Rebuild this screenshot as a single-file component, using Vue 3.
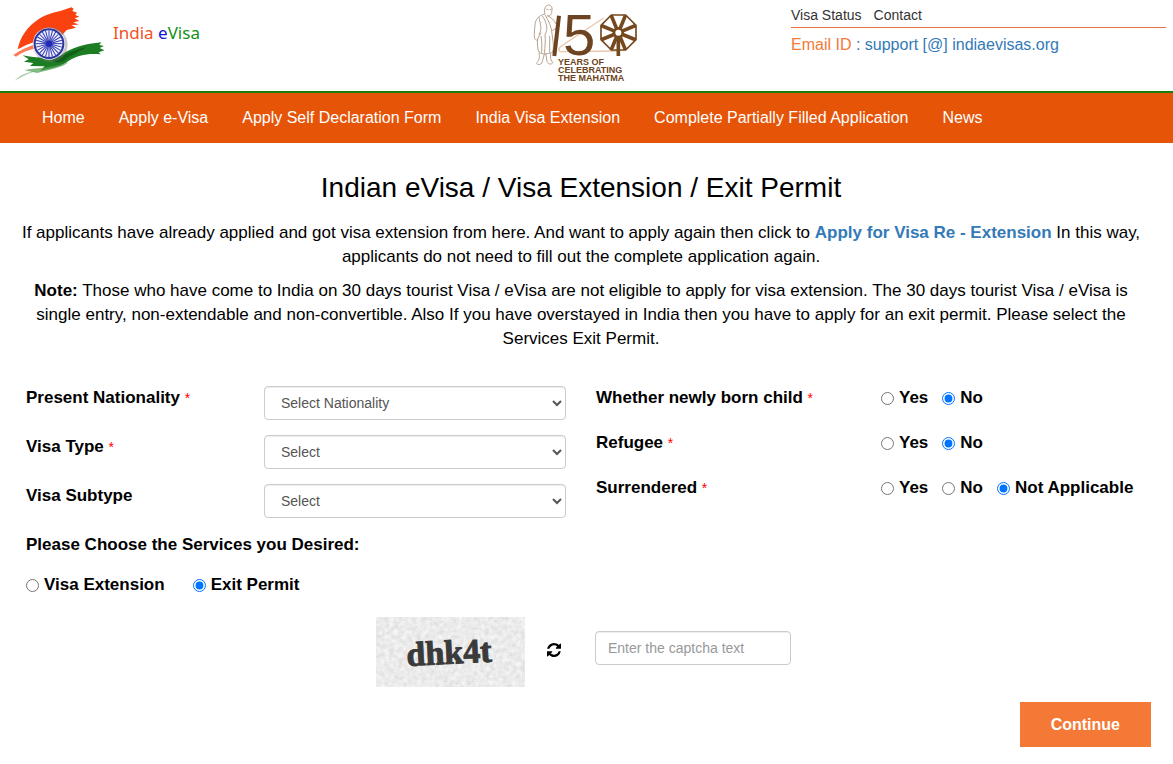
<script setup>
    import { ref, reactive } from 'vue'

    const navLinks = [
        'Home',
        'Apply e-Visa',
        'Apply Self Declaration Form',
        'India Visa Extension',
        'Complete Partially Filled Application',
        'News',
    ]

    const selects = [
        { id: 'nationality', label: 'Present Nationality', required: true, placeholder: 'Select Nationality' },
        { id: 'visaType', label: 'Visa Type', required: true, placeholder: 'Select' },
        { id: 'visaSubtype', label: 'Visa Subtype', required: false, placeholder: 'Select' },
    ]

    const questions = [
        { id: 'newborn', label: 'Whether newly born child', options: ['Yes', 'No'] },
        { id: 'refugee', label: 'Refugee', options: ['Yes', 'No'] },
        { id: 'surrendered', label: 'Surrendered', options: ['Yes', 'No', 'Not Applicable'] },
    ]

    const services = ['Visa Extension', 'Exit Permit']

    const form = reactive({
        nationality: '',
        visaType: '',
        visaSubtype: '',
        newborn: 'No',
        refugee: 'No',
        surrendered: 'Not Applicable',
        service: 'Exit Permit',
    })
    const captcha = ref('')

    // chakra + wheel spokes, in degrees
    const chakraSpokes = Array.from({ length: 24 }, (_, i) => i * 15)
    const wheelSpokes = Array.from({ length: 8 }, (_, i) => i * 45 + 22.5)

    function refreshCaptcha() {
        captcha.value = ''
    }

    function onSubmit() {
        console.log({ ...form, captcha: captcha.value })
    }
</script>

<template>
    <div class="page">
        <header class="top">
            <a class="brand" href="#" aria-label="India eVisa">
                <svg class="flag" viewBox="0 0 330 255" aria-hidden="true">
                    <path fill="#f9420f" d="M53 148 C60 112 82 80 112 60 C142 38 180 36 214 22 L221 26 L217 33 L231 38 L226 45 L238 50 L224 55 L238 63 L220 67 L236 74 L214 75 L228 83 L200 90 C190 100 180 120 140 120 C110 120 84 132 53 148Z" />
                    <path fill="#f9420f" opacity="0.7" d="M40 165 C62 150 80 142 106 133 L108 145 C84 150 66 158 48 170Z" />
                    <path fill="#1d7d22" d="M68 166 C100 172 140 178 180 168 C200 150 240 136 270 131 L304 127 L298 135 L312 138 L299 144 L313 151 L296 157 L302 163 C260 160 232 166 204 184 C190 196 160 206 120 212 L134 199 L90 198 L100 189 L72 185 L86 178Z" />
                    <path fill="#0c5513" opacity="0.7" d="M150 176 C190 172 204 154 258 142 C236 158 210 166 190 184 C176 190 160 188 150 176Z" />
                    <path fill="#4f9d50" opacity="0.7" d="M74 211 C108 202 140 208 206 187 C184 204 146 210 112 219Z" />
                    <path fill="#4f9d50" opacity="0.5" d="M44 242 C58 226 76 218 108 212 C82 222 64 230 44 242Z" />
                    <circle cx="151" cy="134" r="52" fill="#777" opacity="0.4" />
                    <circle cx="147" cy="131" r="48" fill="#eef0ff" />
                    <circle cx="147" cy="131" r="43" fill="none" stroke="#2b359c" stroke-width="6" />
                    <line v-for="a in chakraSpokes" :key="a" x1="147" y1="131" x2="147" y2="91" stroke="#3038b0" stroke-width="3" :transform="`rotate(${a} 147 131)`" />
                    <circle cx="147" cy="131" r="9" fill="#2228b8" />
                </svg>
                <span class="brand-name"><span class="saffron">India</span> <span class="blue">e</span><span class="green">Visa</span></span>
            </a>

            <svg class="mahatma" viewBox="45 0 330 255" role="img" aria-label="150 years of celebrating the Mahatma">
                <g fill="none" stroke="#b7a28f" stroke-width="3" stroke-linejoin="round">
                    <path d="M84 42 C80 28 84 16 95 15 C105 16 107 26 104 34 C105 44 98 50 91 47" />
                    <path d="M84 42 C66 46 54 58 54 76 C52 94 51 108 53 116 C58 124 62 120 64 112 L72 98" />
                    <path d="M91 47 C102 52 112 60 117 72 L124 66 C130 70 128 80 120 84 L106 92" />
                    <path d="M84 44 C96 64 104 82 106 108 M76 48 C90 68 94 88 84 104 M66 52 C70 72 76 86 66 104" />
                    <path d="M62 116 C60 134 62 148 66 156 C78 166 92 160 106 158 C112 142 108 124 106 108" />
                    <path d="M84 104 C86 122 84 142 82 160 M72 108 C76 128 74 144 74 158 M98 108 L98 158" />
                    <path d="M66 158 C68 170 68 178 60 188 C56 194 66 196 74 190 C78 178 80 170 82 162" />
                    <path d="M86 160 L90 184 C92 194 104 194 108 188 C100 182 100 170 101 160" />
                    <path d="M88 28 L94 28 M98 28 L104 28" />
                </g>
                <path d="M260 54 L130 140 C122 148 126 158 136 155 L300 153" fill="none" stroke="#eac6aa" stroke-width="4" />
                <path d="M126 47 L112 168" stroke="#6d4421" stroke-width="12" />
                <text class="five" x="138" y="166">5</text>
                <g stroke="#75491f" fill="none">
                    <polygon points="283,45 326,45 357,76 357,119 326,150 283,150 252,119 252,76" stroke-width="5" />
                    <line v-for="a in wheelSpokes" :key="a" x1="304" y1="84" x2="304" y2="42" stroke-width="11" :transform="`rotate(${a} 304 98)`" />
                    <circle cx="304" cy="98" r="13" stroke-width="8" />
                    <path d="M304 110 L304 168" stroke-width="11" />
                </g>
                <g class="years">
                    <text x="123" y="194">YEARS OF</text>
                    <text x="123" y="218">CELEBRATING</text>
                    <text x="123" y="242">THE MAHATMA</text>
                </g>
            </svg>

            <div class="contact">
                <nav class="contact-links" aria-label="Support">
                    <a href="#">Visa Status</a>
                    <a href="#">Contact</a>
                </nav>
                <p class="email">
                    <span>Email ID</span> : <a href="#">support [@] indiaevisas.org</a>
                </p>
            </div>
        </header>

        <nav class="menu" aria-label="Main">
            <a v-for="link in navLinks" :key="link" href="#">{{ link }}</a>
        </nav>

        <main class="content">
            <h1>Indian eVisa / Visa Extension / Exit Permit</h1>
            <p class="intro">
                If applicants have already applied and got visa extension from here. And want to apply again then click to
                <a href="#">Apply for Visa Re - Extension</a> In this way, applicants do not need to fill out the complete application again.
            </p>
            <p class="intro">
                <b>Note:</b> Those who have come to India on 30 days tourist Visa / eVisa are not eligible to apply for visa extension. The 30 days tourist Visa / eVisa is single entry, non-extendable and non-convertible. Also If you have overstayed in India then you have to apply for an exit permit. Please select the Services Exit Permit.
            </p>

            <form @submit.prevent="onSubmit">
                <div class="columns">
                    <div class="column left">
                        <div v-for="s in selects" :key="s.id" class="select-row">
                            <label :for="s.id">{{ s.label }} <span v-if="s.required" class="star">*</span></label>
                            <select :id="s.id" v-model="form[s.id]">
                                <option value="">{{ s.placeholder }}</option>
                            </select>
                        </div>
                        <fieldset class="services">
                            <legend>Please Choose the Services you Desired:</legend>
                            <div class="service-options">
                                <label v-for="s in services" :key="s" class="radio">
                                    <input type="radio" name="service" :value="s" v-model="form.service" >
                                    {{ s }}
                                </label>
                            </div>
                        </fieldset>
                    </div>
                    <div class="column right">
                        <div v-for="q in questions" :key="q.id" class="question" role="radiogroup" :aria-labelledby="q.id">
                            <span :id="q.id">{{ q.label }} <span class="star">*</span></span>
                            <div class="answers">
                                <label v-for="o in q.options" :key="o" class="radio">
                                    <input type="radio" :name="q.id" :value="o" v-model="form[q.id]" >
                                    {{ o }}
                                </label>
                            </div>
                        </div>
                    </div>
                </div>

                <div class="captcha">
                    <svg class="captcha-image" viewBox="0 0 149 70" role="img" aria-label="Captcha">
                        <filter id="paper" x="0" y="0" width="100%" height="100%">
                            <feTurbulence type="fractalNoise" baseFrequency="0.22" numOctaves="3" seed="4" />
                            <feColorMatrix values="0.3 0 0 0 0.68  0.3 0 0 0 0.68  0.3 0 0 0 0.68  0 0 0 0 1" />
                        </filter>
                        <rect width="149" height="70" fill="#dfdfdf" filter="url(#paper)" />
                        <text x="31" y="49" transform="rotate(-3 31 49)">dhk4t</text>
                    </svg>
                    <button type="button" class="refresh" aria-label="Refresh captcha" @click="refreshCaptcha">
                        <svg viewBox="0 128 1536 1536" aria-hidden="true">
                            <path d="M1511 1056q0 5-1 7-64 268-268 434.500t-478 166.500q-146 0-282.500-55t-243.500-157l-129 129q-19 19-45 19t-45-19-19-45v-448q0-26 19-45t45-19h448q26 0 45 19t19 45-19 45l-137 137q71 66 161 102t187 36q134 0 250-65t186-179q11-17 53-117 8-23 30-23h192q13 0 22.500 9.500t9.500 22.500zm25-800v448q0 26-19 45t-45 19h-448q-26 0-45-19t-19-45 19-45l138-138q-148-137-349-137-134 0-250 65t-186 179q-11 17-53 117-8 23-30 23h-199q-13 0-22.500-9.500t-9.500-22.500v-7q65-268 270-434.500t480-166.500q146 0 284 55.500t245 156.500l130-129q19-19 45-19t45 19 19 45z" />
                        </svg>
                    </button>
                    <input v-model="captcha" type="text" placeholder="Enter the captcha text" aria-label="Enter the captcha text" >
                </div>

                <div class="actions">
                    <button type="submit" class="continue">Continue</button>
                </div>
            </form>
        </main>
    </div>
</template>

<style>
    body {
        margin: 0;
        background: #fff;
    }
</style>

<style scoped>
    .page {
        font-family: "Liberation Sans", Arial, sans-serif;
        font-size: 17px;
        line-height: 24px;
        color: #000;
    }
    .page * { box-sizing: border-box; }
    a { text-decoration: none; color: #337ab7; }

    .top {
        display: grid;
        grid-template-columns: 1fr 1fr 1fr;
        height: 91px;
    }
    .brand { display: flex; align-items: flex-start; }
    .flag { width: 110px; height: 85px; }
    .brand-name {
        margin-left: 3px;
        padding-top: 21px;
        font-family: "Noto Sans", sans-serif;
        font-size: 17px;
    }
    .saffron { color: #f4511e; }
    .blue { color: #1414e0; }
    .green { color: #149114; }

    .mahatma { width: 110px; height: 85px; justify-self: center; }
    .five {
        font: 174px "Liberation Sans", Arial, sans-serif;
        fill: #6d4421;
    }
    .years {
        font: bold 27px "Liberation Sans", Arial, sans-serif;
        fill: #6d4421;
    }

    .contact { padding: 4px 7px 0 9px; }
    .contact-links {
        display: flex;
        gap: 12px;
        padding-bottom: 1px;
        font-size: 14px;
        line-height: 22px;
        border-bottom: 1px solid #e0703f;
    }
    .contact-links a { color: #333; }
    .email { margin: 5px 0 0; font-size: 16px; color: #337ab7; }
    .email span { color: #f57936; }

    .menu {
        display: flex;
        padding: 0 25px;
        background: #e65408;
        border-top: 2px solid #1b7d0c;
    }
    .menu a {
        padding: 13px 17px;
        font-size: 16px;
        color: #fff;
    }

    .content { padding: 28px 22px 17px 11px; }
    h1 {
        margin: 0 0 17px;
        font-size: 28px;
        font-weight: 400;
        line-height: 33px;
        text-align: center;
    }
    .intro { margin: 0 0 10px; text-align: center; }
    .intro a { font-weight: 700; }

    form { margin-top: 35px; }
    .columns { display: grid; grid-template-columns: 1fr 1fr; font-weight: 700; }
    .column { padding: 0 15px; }
    .select-row {
        display: grid;
        grid-template-columns: 238fr 302fr;
        margin-bottom: 15px;
    }
    .star { color: #f00; font-size: 14px; font-weight: 400; line-height: 14px; }
    select, .captcha input {
        height: 34px;
        padding: 6px 12px;
        font-family: inherit;
        font-size: 14px;
        color: #555;
        background: #fff;
        border: 1px solid #ccc;
        border-radius: 4px;
        box-shadow: inset 0 1px 1px rgba(0,0,0,0.075);
    }
    select { width: 100%; }

    .services { margin: 0; padding: 0; border: none; }
    .services legend { padding: 0; }
    .service-options { display: flex; gap: 28px; margin-top: 16px; }
    .radio { display: flex; align-items: center; gap: 5px; }
    .radio input { width: 13px; height: 13px; margin: 0; }

    .question {
        display: grid;
        grid-template-columns: 285fr 255fr;
        margin-bottom: 21px;
    }
    .answers { display: flex; gap: 14px; white-space: nowrap; }

    .captcha {
        display: flex;
        align-items: flex-start;
        justify-content: center;
        margin-top: 20px;
        padding-left: 5px;
    }
    .captcha-image { width: 149px; height: 70px; }
    .captcha-image text {
        font: bold 34px "Liberation Serif", serif;
        fill: #3a3a3a;
        stroke: #3a3a3a;
        stroke-width: 1px;
    }
    .refresh {
        margin: 26px 34px 0 22px;
        padding: 0;
        background: none;
        border: none;
        cursor: pointer;
    }
    .refresh svg { display: block; width: 14px; height: 14px; }
    .captcha input { width: 196px; margin-top: 14px; }
    .captcha input::placeholder { color: #999; }

    .actions { display: flex; justify-content: flex-end; margin-top: 15px; }
    .continue {
        padding: 11px 31px;
        font-family: inherit;
        font-size: 16px;
        font-weight: 700;
        line-height: 23px;
        color: #fff;
        background: #f57936;
        border: none;
        cursor: pointer;
    }
</style>
